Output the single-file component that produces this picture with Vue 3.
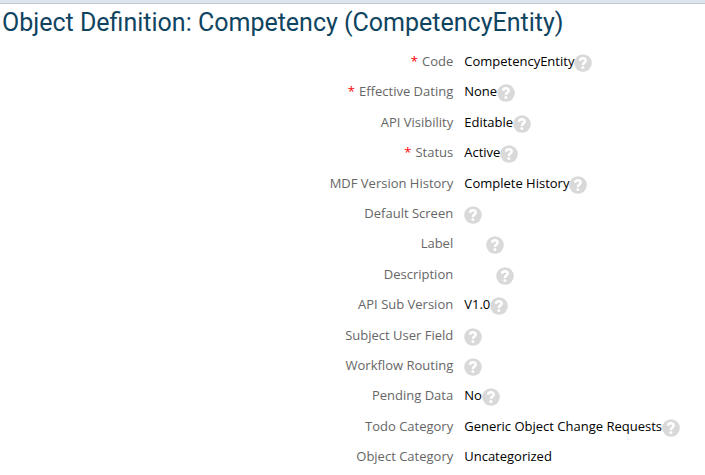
<script setup>
const title = 'Object Definition: Competency (CompetencyEntity)'

const fields = [
  { label: 'Code', value: 'CompetencyEntity', required: true, help: true },
  { label: 'Effective Dating', value: 'None', required: true, help: true },
  { label: 'API Visibility', value: 'Editable', help: true },
  { label: 'Status', value: 'Active', required: true, help: true },
  { label: 'MDF Version History', value: 'Complete History', help: true },
  { label: 'Default Screen', value: '', help: true },
  { label: 'Label', value: '', help: true, blank: 'blank-short' },
  { label: 'Description', value: '', help: true, blank: 'blank-long' },
  { label: 'API Sub Version', value: 'V1.0', help: true },
  { label: 'Subject User Field', value: '', help: true },
  { label: 'Workflow Routing', value: '', help: true },
  { label: 'Pending Data', value: 'No', help: true },
  { label: 'Todo Category', value: 'Generic Object Change Requests', help: true },
  { label: 'Object Category', value: 'Uncategorized' },
]
</script>

<template>
  <main class="page">
    <h1 class="title">{{ title }}</h1>
    <dl class="fields">
      <div v-for="field in fields" :key="field.label" class="row">
        <dt class="label"><span v-if="field.required" class="required">*</span>{{ field.label }}</dt>
        <dd class="value">
          <span :class="field.blank">{{ field.value }}</span>
          <button v-if="field.help" type="button" class="help" :aria-label="'Help: ' + field.label">
            <svg viewBox="0 0 18 18" width="18" height="18" aria-hidden="true">
              <circle cx="9" cy="9" r="8.8" fill="#d9d9d9" />
              <path d="M6.1 6.8C6.2 3.6 11.7 3.5 11.7 6.6C11.7 8.6 8.9 8.6 8.9 11" fill="none" stroke="#fff" stroke-width="2.5" />
              <circle cx="8.9" cy="13.6" r="1.5" fill="#fff" />
            </svg>
          </button>
        </dd>
      </div>
    </dl>
  </main>
</template>

<style>
body {
  background: #fff;
}
</style>

<style scoped>
.page {
  border-top: 3px solid #dde4ed;
  box-shadow: inset 0 1px 0 #c3cad1;
  font-family: "Open Sans", "Noto Sans", sans-serif;
}

.title {
  margin: 0;
  padding: 4px 2px 7px;
  color: #0f4461;
  font-family: Roboto, "Open Sans", sans-serif;
  font-size: 25px;
  font-weight: 400;
  line-height: 32px;
}

.fields {
  margin: 0;
  font-size: 13px;
}

.row {
  display: grid;
  grid-template-columns: 9fr 5fr;
  height: 30px;
  line-height: 30px;
}

.row:nth-child(5n + 2),
.row:nth-child(5n + 4) {
  height: 31px;
}

.label {
  color: #666;
  text-align: right;
}

.required {
  margin-right: 4px;
  color: #f00;
}

.value {
  display: flex;
  margin: 0;
  padding-left: 11px;
  color: #000;
  white-space: nowrap;
}

.blank-short {
  width: 22px;
}

.blank-long {
  width: 32px;
}

.help {
  width: 18px;
  height: 18px;
  margin: 8px 0 0;
  padding: 0;
  border: 0;
  background: none;
  cursor: pointer;
}

.help svg {
  display: block;
}
</style>
